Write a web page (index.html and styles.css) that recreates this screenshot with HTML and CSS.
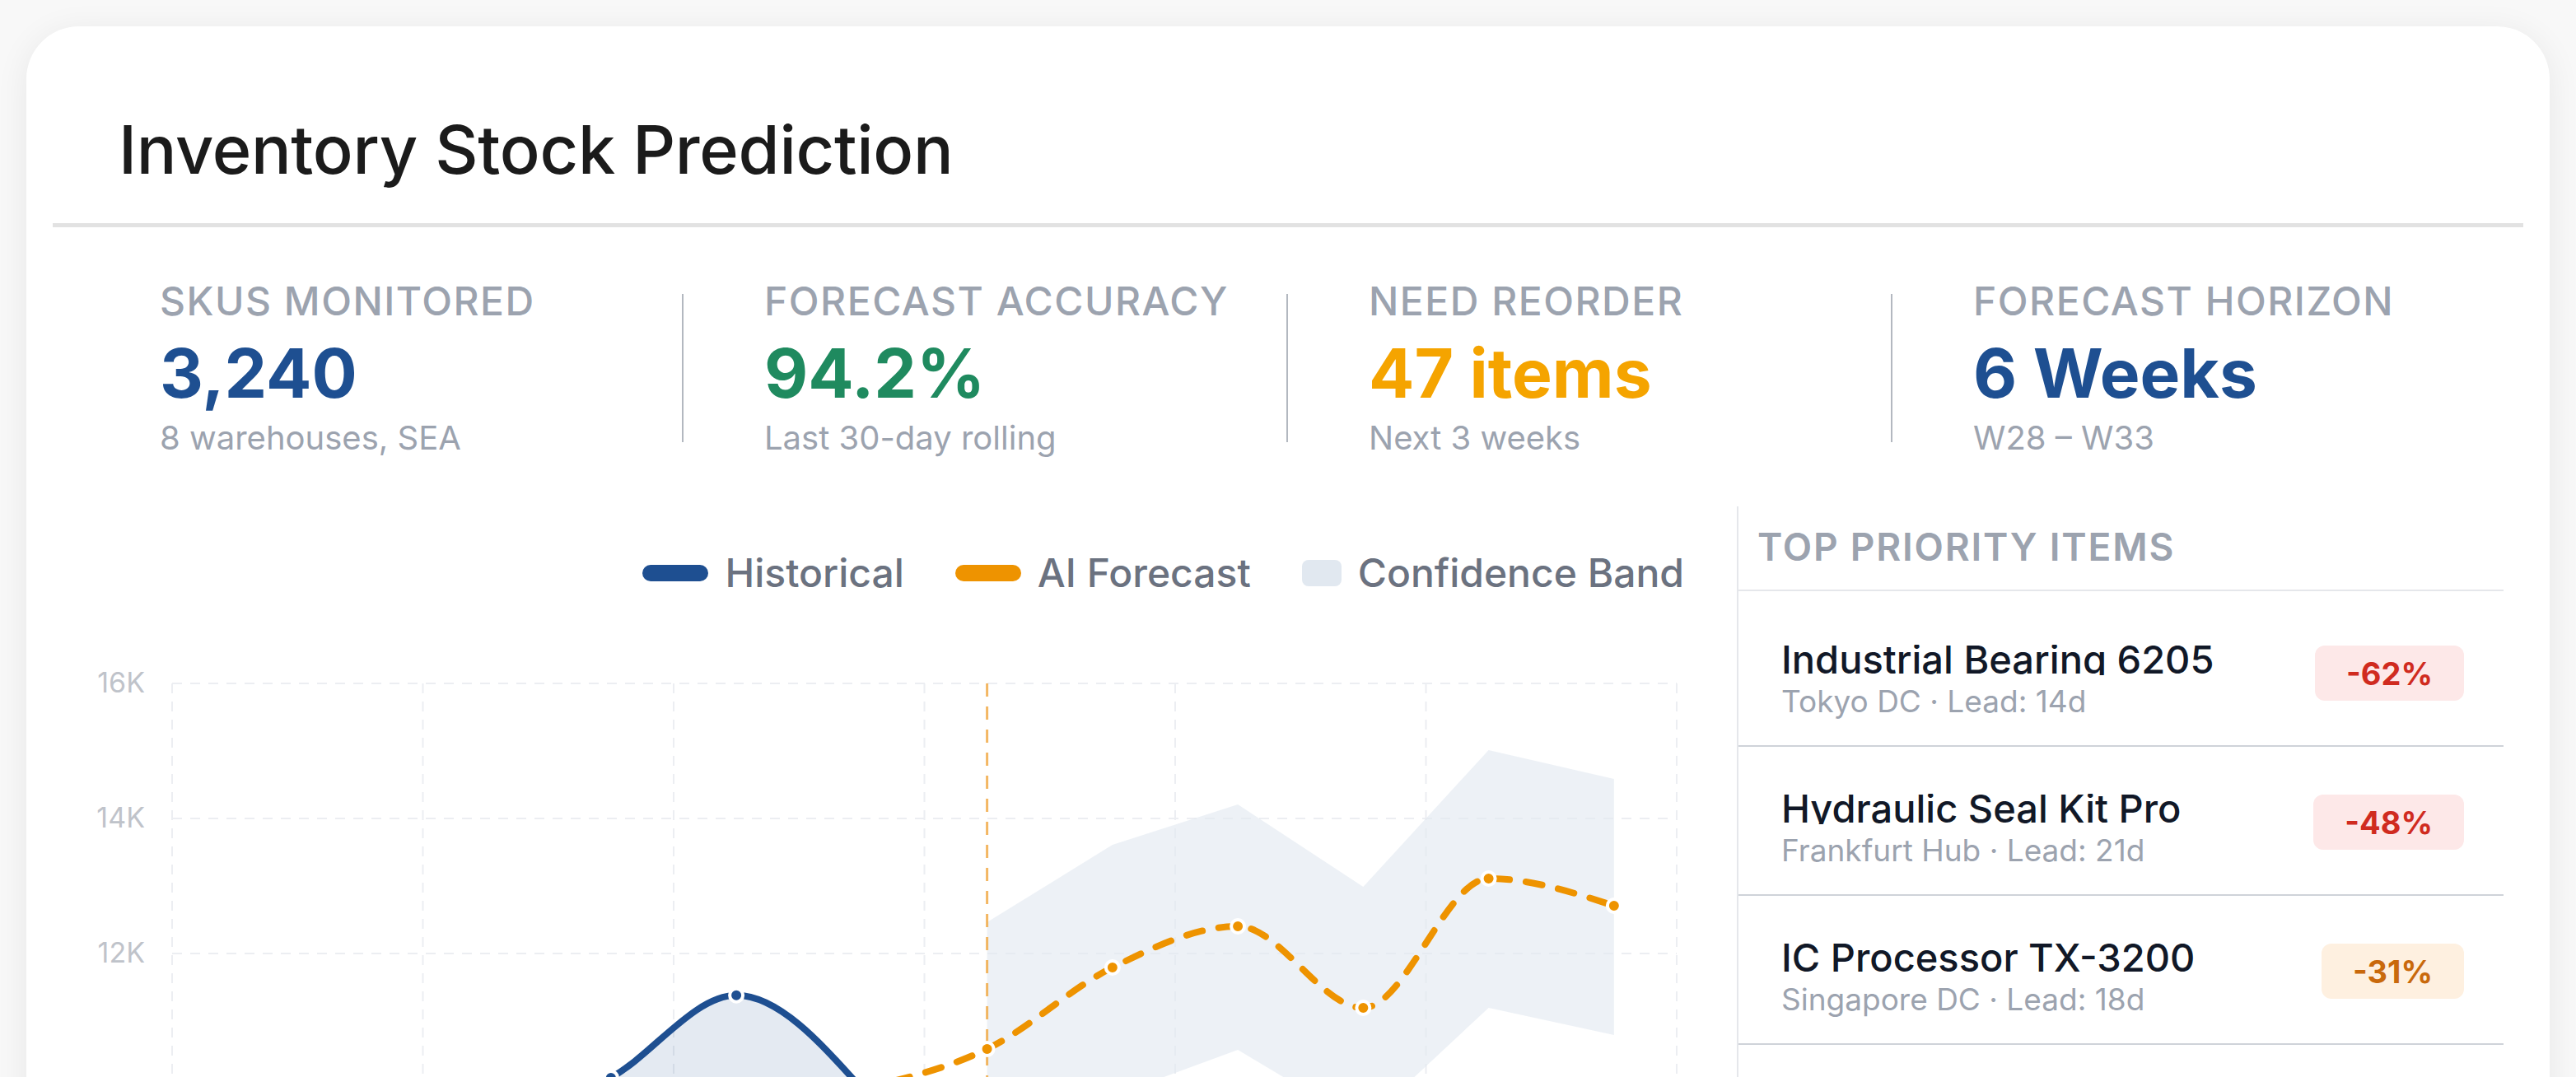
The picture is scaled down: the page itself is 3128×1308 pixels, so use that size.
FILE: index.html
```html
<!DOCTYPE html>
<html lang="en">
<head>
<meta charset="utf-8">
<title>Inventory Stock Prediction</title>
<link rel="stylesheet" href="styles.css">
</head>
<body>
<main class="card">
  <header class="card-header">
    <h1 class="title">Inventory Stock Prediction</h1>
  </header>

  <section class="kpis">
    <div class="kpi">
      <div class="kpi-text">
        <div class="kpi-label">SKUs Monitored</div>
        <div class="kpi-value blue">3,240</div>
        <div class="kpi-sub">8 warehouses, SEA</div>
      </div>
    </div>
    <div class="kpi">
      <div class="kpi-text">
        <div class="kpi-label">Forecast Accuracy</div>
        <div class="kpi-value green">94.2%</div>
        <div class="kpi-sub">Last 30-day rolling</div>
      </div>
    </div>
    <div class="kpi">
      <div class="kpi-text">
        <div class="kpi-label">Need Reorder</div>
        <div class="kpi-value amber">47 items</div>
        <div class="kpi-sub">Next 3 weeks</div>
      </div>
    </div>
    <div class="kpi">
      <div class="kpi-text">
        <div class="kpi-label">Forecast Horizon</div>
        <div class="kpi-value blue">6 Weeks</div>
        <div class="kpi-sub">W28 – W33</div>
      </div>
    </div>
  </section>

  <section class="body">
    <div class="chart">
      <div class="legend">
        <span class="legend-item"><span class="swatch-line hist"></span>Historical</span>
        <span class="legend-item"><span class="swatch-line fc"></span>AI Forecast</span>
        <span class="legend-item"><span class="swatch-box"></span>Confidence Band</span>
      </div>
      <svg class="plot" width="2045" height="620" viewBox="0 0 2045 620">
        <g class="grid">
          <line x1="145" y1="51" x2="1972" y2="51"/>
          <line x1="145" y1="215" x2="1972" y2="215"/>
          <line x1="145" y1="379" x2="1972" y2="379"/>
          <line x1="145" y1="543" x2="1972" y2="543"/>
          <line x1="145" y1="51" x2="145" y2="620"/>
          <line x1="449.5" y1="51" x2="449.5" y2="620"/>
          <line x1="754" y1="51" x2="754" y2="620"/>
          <line x1="1058.5" y1="51" x2="1058.5" y2="620"/>
          <line x1="1363" y1="51" x2="1363" y2="620"/>
          <line x1="1667.5" y1="51" x2="1667.5" y2="620"/>
          <line x1="1972" y1="51" x2="1972" y2="620"/>
        </g>
        <g class="axis">
          <text x="112" y="62">16K</text>
          <text x="112" y="226">14K</text>
          <text x="112" y="390">12K</text>
        </g>
        <polygon class="band" points="1134.6,341 1286.85,247 1439.1,198 1591.35,298 1743.6,132 1895.85,167 1895.85,478 1743.6,445 1591.35,587 1439.1,496 1286.85,552 1134.6,608.6"/>
        <path class="hist-area" d="M221.1,608.6 C271.85,592.2 322.6,575.8 373.35,575.8 C424.1,575.8 474.85,600.4 525.6,600.4 C576.35,600.4 627.1,558.3 677.85,529.9 C728.6,501.5 779.35,429.8 830.1,429.8 C880.85,429.8 931.6,486.4 982.35,543 L982.35,620 L221.1,620 Z"/>
        <line class="today" x1="1134.6" y1="51" x2="1134.6" y2="620"/>
        <path class="hist-line" d="M221.1,608.6 C271.85,592.2 322.6,575.8 373.35,575.8 C424.1,575.8 474.85,600.4 525.6,600.4 C576.35,600.4 627.1,558.3 677.85,529.9 C728.6,501.5 779.35,429.8 830.1,429.8 C880.85,429.8 931.6,486.4 982.35,543"/>
        <path class="fc-line" d="M982.35,543 C1033.1,531.25 1083.85,519.5 1134.6,495 C1185.35,470.5 1236.1,420.83 1286.85,396 C1337.6,371.17 1388.35,346 1439.1,346 C1489.85,346 1540.6,445 1591.35,445 C1642.1,445 1692.85,288 1743.6,288 C1794.35,288 1845.1,304.5 1895.85,321"/>
        <g class="pts hist-pts">
          <circle cx="221.1" cy="608.6" r="8"/>
          <circle cx="373.35" cy="575.8" r="8"/>
          <circle cx="525.6" cy="600.4" r="8"/>
          <circle cx="677.85" cy="529.9" r="8"/>
          <circle cx="830.1" cy="429.8" r="8"/>
          <circle cx="982.35" cy="543" r="8"/>
        </g>
        <g class="pts fc-pts">
          <circle cx="1134.6" cy="495" r="8"/>
          <circle cx="1286.85" cy="396" r="8"/>
          <circle cx="1439.1" cy="346" r="8"/>
          <circle cx="1591.35" cy="445" r="8"/>
          <circle cx="1743.6" cy="288" r="8"/>
          <circle cx="1895.85" cy="321" r="8"/>
        </g>
      </svg>
    </div>

    <aside class="panel">
      <div class="panel-head">Top Priority Items</div>
      <ul class="items">
        <li class="item">
          <div class="item-info">
            <div class="item-name">Industrial Bearing 6205</div>
            <div class="item-sub">Tokyo DC · Lead: 14d</div>
          </div>
          <span class="badge high">-62%</span>
        </li>
        <li class="item">
          <div class="item-info">
            <div class="item-name">Hydraulic Seal Kit Pro</div>
            <div class="item-sub">Frankfurt Hub · Lead: 21d</div>
          </div>
          <span class="badge high">-48%</span>
        </li>
        <li class="item">
          <div class="item-info">
            <div class="item-name">IC Processor TX-3200</div>
            <div class="item-sub">Singapore DC · Lead: 18d</div>
          </div>
          <span class="badge mid">-31%</span>
        </li>
      </ul>
    </aside>
  </section>
</main>
</body>
</html>
```

FILE: styles.css
```css
html,
body {
  margin: 0;
  height: 100%;
  overflow: hidden;
}

body {
  box-sizing: border-box;
  padding: 32px;
  background: #f8f8f8;
  font-family: Inter, "Noto Sans", "Liberation Sans", sans-serif;
  color: #111827;
}

.card {
  background: #ffffff;
  border-radius: 64px;
  box-shadow: 0 6px 40px rgba(0, 0, 0, 0.07);
  padding: 0 32px;
  min-height: 1500px;
}

/* header */
.card-header {
  padding: 102px 0 40px 80px;
  border-bottom: 5px solid #e2e2e2;
}

.title {
  margin: 0;
  font-size: 81px;
  line-height: 1.2;
  font-weight: 500;
  color: #1b1b1b;
  letter-spacing: -0.3px;
}

/* KPI strip */
.kpis {
  display: grid;
  grid-template-columns: repeat(4, 734px);
  padding: 61px 0 0 30px;
}

.kpi {
  display: flex;
  align-items: center;
}

.kpi:first-child {
  padding-left: 100px;
}

.kpi + .kpi::before {
  content: "";
  flex: none;
  width: 2px;
  height: 180px;
  margin-right: 98px;
  background: #b3b8c0;
}

.kpi-label {
  font-size: 48px;
  line-height: 1.2;
  font-weight: 500;
  letter-spacing: 1.5px;
  text-transform: uppercase;
  color: #9ca3af;
}

.kpi-value {
  margin-top: 10px;
  font-size: 82px;
  line-height: 1.2;
  font-weight: 700;
}

.kpi-sub {
  margin-top: 5px;
  font-size: 40px;
  line-height: 1.2;
  color: #9ca3af;
}

.blue { color: #1e4f91; }
.green { color: #1f8a5f; }
.amber { color: #f5a400; }

/* chart + list */
.body {
  display: grid;
  grid-template-columns: 2045px 931px;
  margin-top: 59px;
}

.chart {
  padding-top: 52px;
}

.legend {
  display: flex;
  justify-content: flex-end;
  gap: 62px;
  padding-right: 64px;
  font-size: 48px;
  line-height: 1.2;
  font-weight: 500;
  color: #6b7280;
}

.legend-item {
  display: flex;
  align-items: center;
  gap: 20px;
}

.swatch-line {
  width: 80px;
  height: 20px;
  border-radius: 10px;
}

.swatch-line.hist { background: #1e4f91; }
.swatch-line.fc { background: #ee9300; }

.swatch-box {
  width: 48px;
  height: 32px;
  border-radius: 8px;
  background: #e1e8f0;
}

.plot {
  display: block;
  margin-top: 54px;
}

.grid line {
  stroke: #eceef2;
  stroke-width: 2;
  stroke-dasharray: 12 10;
}

.axis text {
  font-family: Inter, "Noto Sans", sans-serif;
  font-size: 34px;
  fill: #bfc3ca;
  text-anchor: end;
}

.band {
  fill: #e2e8f0;
  opacity: 0.62;
}

.hist-area {
  fill: #1e4f91;
  opacity: 0.12;
}

.today {
  stroke: #f0a030;
  stroke-width: 3;
  stroke-dasharray: 16 12;
  opacity: 0.75;
}

.hist-line {
  fill: none;
  stroke: #1e4f91;
  stroke-width: 8;
  stroke-linecap: round;
}

.fc-line {
  fill: none;
  stroke: #ee9300;
  stroke-width: 8;
  stroke-linecap: round;
  stroke-dasharray: 20 20;
}

.pts circle {
  stroke: #ffffff;
  stroke-width: 4;
}

.hist-pts circle { fill: #1e4f91; }
.fc-pts circle { fill: #ee9300; }

/* priority list */
.panel {
  border-left: 2px solid #e5e7eb;
}

.panel-head {
  padding: 22px 0 24px 23px;
  border-bottom: 2px solid #e5e7eb;
  font-size: 46px;
  line-height: 1.2;
  font-weight: 600;
  letter-spacing: 1.8px;
  text-transform: uppercase;
  color: #9ca3af;
}

.items {
  list-style: none;
  margin: 0;
  padding: 8px 0 0;
}

.item {
  box-sizing: border-box;
  height: 181px;
  display: flex;
  align-items: flex-start;
  justify-content: space-between;
  padding: 57px 48px 0 52px;
  border-bottom: 2px solid #cfd3d9;
}

.item-name {
  font-size: 47px;
  line-height: 0.78;
  font-weight: 500;
  color: #111827;
  white-space: nowrap;
  overflow: hidden;
}

.item-sub {
  margin-top: 8px;
  font-size: 37px;
  line-height: 1.3;
  color: #9ca3af;
}

.badge {
  display: flex;
  align-items: center;
  height: 67px;
  margin-top: 1px;
  padding: 0 38px;
  border-radius: 12px;
  font-size: 38px;
  font-weight: 700;
}

.badge.high {
  background: #fde8e8;
  color: #d02b1f;
}

.badge.mid {
  background: #fef0e0;
  color: #c9690c;
}
```
